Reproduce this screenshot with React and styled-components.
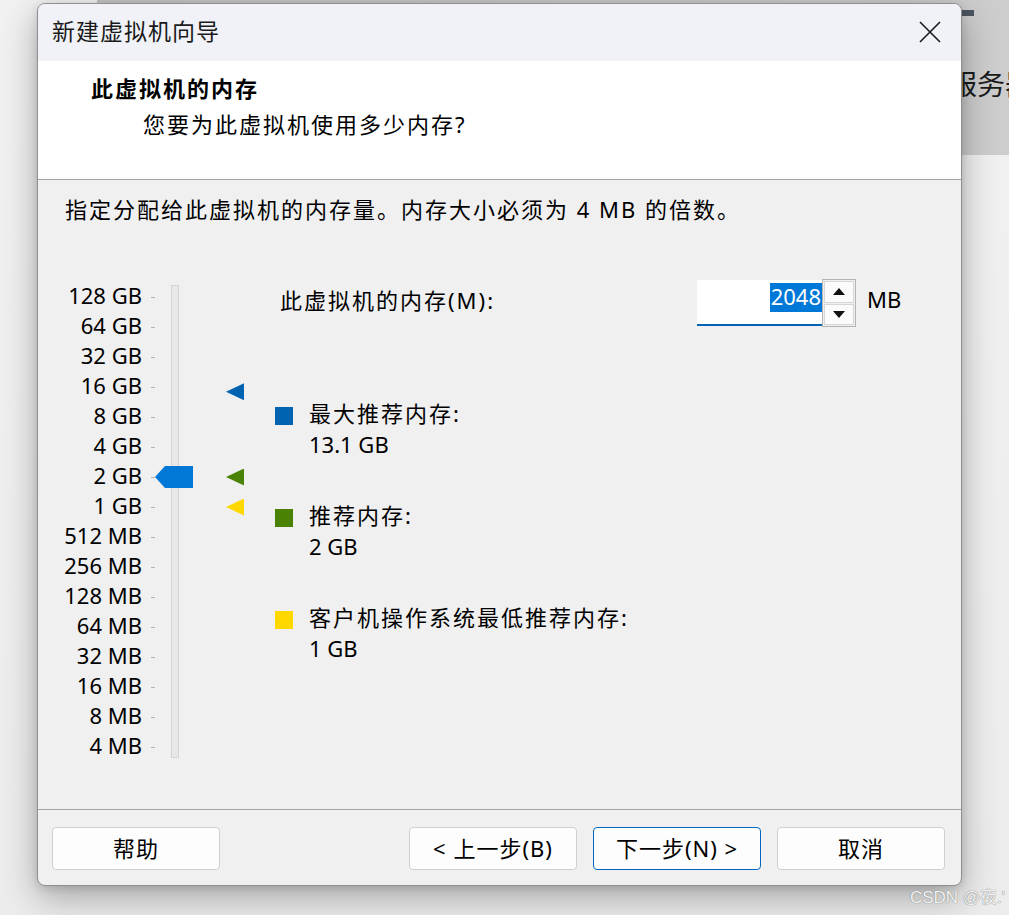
import React from 'react';
import styled, { createGlobalStyle } from 'styled-components';

const GlobalStyle = createGlobalStyle`
  html, body {
    margin: 0;
    padding: 0;
  }
  body {
    width: 1009px;
    height: 915px;
    overflow: hidden;
    background: #f3f3f3;
    font-family: "Noto Sans", "Noto Sans CJK SC", sans-serif;
    color: #000;
  }
`;

const Desktop = styled.div`
  position: relative;
  width: 1009px;
  height: 915px;
  overflow: hidden;
  background: linear-gradient(180deg, #f1f1f1 0%, #ececec 100%);
`;

const BackWindow = styled.div`
  margin-left: 97px;
  height: 155px;
  background: linear-gradient(90deg, #c4c4c4 0%, #cdcdcd 100%);
  display: flex;
  flex-direction: column;
`;

const BackDash = styled.div`
  margin: 10px 0 0 863px;
  width: 14px;
  height: 6px;
  background: #4a5561;
`;

const BackLabel = styled.div`
  margin: 50px 0 0 852px;
  font-family: "Noto Sans CJK SC", sans-serif;
  font-size: 28px;
  line-height: 34px;
  color: #1b1b1b;
  white-space: nowrap;
`;

const Dialog = styled.div`
  position: absolute;
  left: 37px;
  top: 3px;
  width: 925px;
  height: 883px;
  box-sizing: border-box;
  border: 1px solid #8f8f8f;
  border-radius: 8px;
  overflow: hidden;
  background: #f0f0f0;
  display: flex;
  flex-direction: column;
  box-shadow: 0 12px 34px rgba(0, 0, 0, 0.3), 0 2px 8px rgba(0, 0, 0, 0.12);
`;

const TitleBar = styled.div`
  height: 57px;
  flex: none;
  background: #f0f2f7;
  display: flex;
  align-items: center;
  justify-content: space-between;
  padding: 0 20px 0 14px;
`;

const Title = styled.div`
  margin-bottom: 6px;
  font-family: "Noto Sans CJK SC", sans-serif;
  font-size: 23px;
  letter-spacing: 1px;
  color: #1a1a1a;
`;

const CloseButton = styled.div`
  width: 22px;
  height: 22px;
  display: flex;
  margin-bottom: 2px;
`;

const Header = styled.div`
  height: 119px;
  flex: none;
  box-sizing: border-box;
  background: #fff;
  border-bottom: 1px solid #a3a3a3;
  padding: 11px 0 0 53px;
`;

const Heading = styled.div`
  font-size: 22px;
  line-height: 32px;
  letter-spacing: 2px;
  font-weight: 700;
`;

const SubHeading = styled.div`
  margin: 4px 0 0 52px;
  font-size: 22px;
  line-height: 32px;
  letter-spacing: 2px;
`;

const Body = styled.div`
  flex: 1;
  min-height: 0;
  padding: 13px 0 0 26px;
`;

const Instruction = styled.div`
  padding-left: 1px;
  font-size: 22px;
  line-height: 32px;
  letter-spacing: 2px;
`;

const Main = styled.div`
  margin-top: 57px;
  display: flex;
  align-items: flex-start;
`;

const Scale = styled.div`
  position: relative;
  display: flex;
  align-items: flex-start;
`;

const LabelList = styled.div`
  display: grid;
  grid-auto-rows: 30px;
`;

const LabelRow = styled.div`
  display: flex;
  align-items: center;
`;

const LabelText = styled.span`
  width: 78px;
  margin-bottom: 4px;
  text-align: right;
  font-size: 22px;
  white-space: nowrap;
`;

const Tick = styled.span`
  width: 4px;
  height: 1px;
  margin-left: 9px;
  background: #b4b4b4;
`;

const Track = styled.div`
  margin: 3px 0 0 16px;
  width: 8px;
  height: 473px;
  box-sizing: border-box;
  background: #e7e8e8;
  border: 1px solid #d2d4d4;
`;

const Thumb = styled.div`
  position: absolute;
  left: 91px;
  width: 38px;
  height: 22px;
  background: #0078d7;
  clip-path: polygon(0 50%, 10px 0, 100% 0, 100% 100%, 10px 100%);
`;

const Markers = styled.div`
  position: relative;
  margin-left: 47px;
  width: 18px;
  height: 473px;
`;

const Marker = styled.div`
  position: absolute;
  left: 0;
  width: 18px;
  height: 17px;
  background: ${(p) => p.$color};
  clip-path: polygon(0 50%, 100% 0, 100% 100%);
`;

const Pane = styled.div`
  margin: -3px 0 0 31px;
  display: flex;
  flex-direction: column;
`;

const MemRow = styled.div`
  display: flex;
  align-items: center;
  height: 48px;
`;

const MemLabel = styled.div`
  width: 417px;
  padding-left: 5px;
  margin-bottom: 8px;
  font-size: 22px;
  letter-spacing: 2px;
  white-space: nowrap;
`;

const SpinInput = styled.div`
  width: 125px;
  height: 46px;
  box-sizing: border-box;
  background: #fff;
  border-bottom: 2px solid #0063b8;
  display: flex;
  justify-content: flex-end;
  align-items: flex-start;
  padding-top: 3px;
`;

const Selected = styled.span`
  background: #0078d7;
  color: #fff;
  font-size: 22px;
  line-height: 27px;
  height: 29px;
  padding: 0 1px;
`;

const SpinButtons = styled.div`
  width: 34px;
  height: 48px;
  box-sizing: border-box;
  border: 1px solid #b3b3b3;
  display: flex;
  flex-direction: column;
  gap: 1px;
  padding: 1px;
  background: #f0f0f0;
`;

const SpinButton = styled.div`
  flex: 1;
  box-sizing: border-box;
  border: 1px solid #d6d6d6;
  background: #fbfbfb;
  display: flex;
  align-items: center;
  justify-content: center;
`;

const Unit = styled.span`
  margin: 0 0 8px 11px;
  font-size: 22px;
`;

const Legend = styled.div`
  margin-top: 71px;
  display: flex;
  flex-direction: column;
  gap: 40px;
`;

const LegendItem = styled.div`
  display: grid;
  grid-template-columns: 18px auto;
  column-gap: 16px;
  align-items: start;
`;

const Swatch = styled.span`
  width: 18px;
  height: 18px;
  margin-top: 9px;
  background: ${(p) => p.$color};
`;

const LegendText = styled.div`
  font-size: 22px;
  line-height: 31px;
  letter-spacing: ${(p) => (p.$cjk ? '2px' : '0')};
  white-space: nowrap;
`;

const Footer = styled.div`
  height: 76px;
  flex: none;
  box-sizing: border-box;
  border-top: 1px solid #a3a3a3;
  padding: 17px 16px 0 14px;
  display: flex;
  align-items: flex-start;
  gap: 16px;
`;

const Spacer = styled.div`
  flex: 1;
`;

const Button = styled.div`
  width: 168px;
  height: 43px;
  box-sizing: border-box;
  border: 1px solid ${(p) => (p.$primary ? '#0067c0' : '#d0d0d0')};
  border-radius: 4px;
  background: #fdfdfd;
  display: flex;
  align-items: center;
  justify-content: center;
  padding-bottom: 4px;
  font-size: 22px;
  letter-spacing: 1px;
  white-space: nowrap;
`;

const Watermark = styled.div`
  position: absolute;
  right: 4px;
  bottom: 7px;
  font-family: "Liberation Sans", "Noto Sans CJK SC", sans-serif;
  font-size: 17px;
  color: rgba(255, 255, 255, 0.9);
  text-shadow: 0 0 1px #8a8a8a, 0 0 1px #8a8a8a;
  white-space: nowrap;
`;

const TOP_MB = 131072;
const ROW = 30;

const centerFor = (mb) => ROW / 2 + Math.log2(TOP_MB / mb) * ROW;

const rows = [
  '128 GB', '64 GB', '32 GB', '16 GB', '8 GB', '4 GB', '2 GB', '1 GB',
  '512 MB', '256 MB', '128 MB', '64 MB', '32 MB', '16 MB', '8 MB', '4 MB',
];

const markers = [
  { color: '#0063b1', mb: 13414, title: '最大推荐内存:', value: '13.1 GB', nudge: -4 },
  { color: '#498205', mb: 2048, title: '推荐内存:', value: '2 GB', nudge: 0 },
  { color: '#ffd800', mb: 1024, title: '客户机操作系统最低推荐内存:', value: '1 GB', nudge: 0 },
];

const current = 2048;

const Arrow = ({ down }) => (
  <svg width="12" height="7" viewBox="0 0 12 7">
    <path d={down ? 'M0 0 L12 0 L6 7 Z' : 'M0 7 L12 7 L6 0 Z'} fill="#111" />
  </svg>
);

export default function App() {
  return (
    <Desktop>
      <GlobalStyle />
      <BackWindow>
        <BackDash />
        <BackLabel>服务器</BackLabel>
      </BackWindow>

      <Dialog>
        <TitleBar>
          <Title>新建虚拟机向导</Title>
          <CloseButton>
            <svg width="22" height="22" viewBox="0 0 22 22">
              <path d="M1 1 L21 21 M21 1 L1 21" stroke="#1a1a1a" strokeWidth="1.6" fill="none" />
            </svg>
          </CloseButton>
        </TitleBar>

        <Header>
          <Heading>此虚拟机的内存</Heading>
          <SubHeading>您要为此虚拟机使用多少内存?</SubHeading>
        </Header>

        <Body>
          <Instruction>指定分配给此虚拟机的内存量。内存大小必须为 4 MB 的倍数。</Instruction>
          <Main>
            <Scale>
              <LabelList>
                {rows.map((l) => (
                  <LabelRow key={l}>
                    <LabelText>{l}</LabelText>
                    <Tick />
                  </LabelRow>
                ))}
              </LabelList>
              <Track />
              <Thumb style={{ top: centerFor(current) - 11 }} />
            </Scale>

            <Markers>
              {markers.map((m) => (
                <Marker
                  key={m.color}
                  $color={m.color}
                  style={{ top: centerFor(m.mb) - 8.5 + m.nudge }}
                />
              ))}
            </Markers>

            <Pane>
              <MemRow>
                <MemLabel>此虚拟机的内存(M):</MemLabel>
                <SpinInput>
                  <Selected>2048</Selected>
                </SpinInput>
                <SpinButtons>
                  <SpinButton><Arrow /></SpinButton>
                  <SpinButton><Arrow down /></SpinButton>
                </SpinButtons>
                <Unit>MB</Unit>
              </MemRow>

              <Legend>
                {markers.map((m) => (
                  <LegendItem key={m.title}>
                    <Swatch $color={m.color} />
                    <LegendText $cjk>{m.title}</LegendText>
                    <span />
                    <LegendText>{m.value}</LegendText>
                  </LegendItem>
                ))}
              </Legend>
            </Pane>
          </Main>
        </Body>

        <Footer>
          <Button>帮助</Button>
          <Spacer />
          <Button>&lt; 上一步(B)</Button>
          <Button $primary>下一步(N) &gt;</Button>
          <Button>取消</Button>
        </Footer>
      </Dialog>

      <Watermark>CSDN @夜.'</Watermark>
    </Desktop>
  );
}
